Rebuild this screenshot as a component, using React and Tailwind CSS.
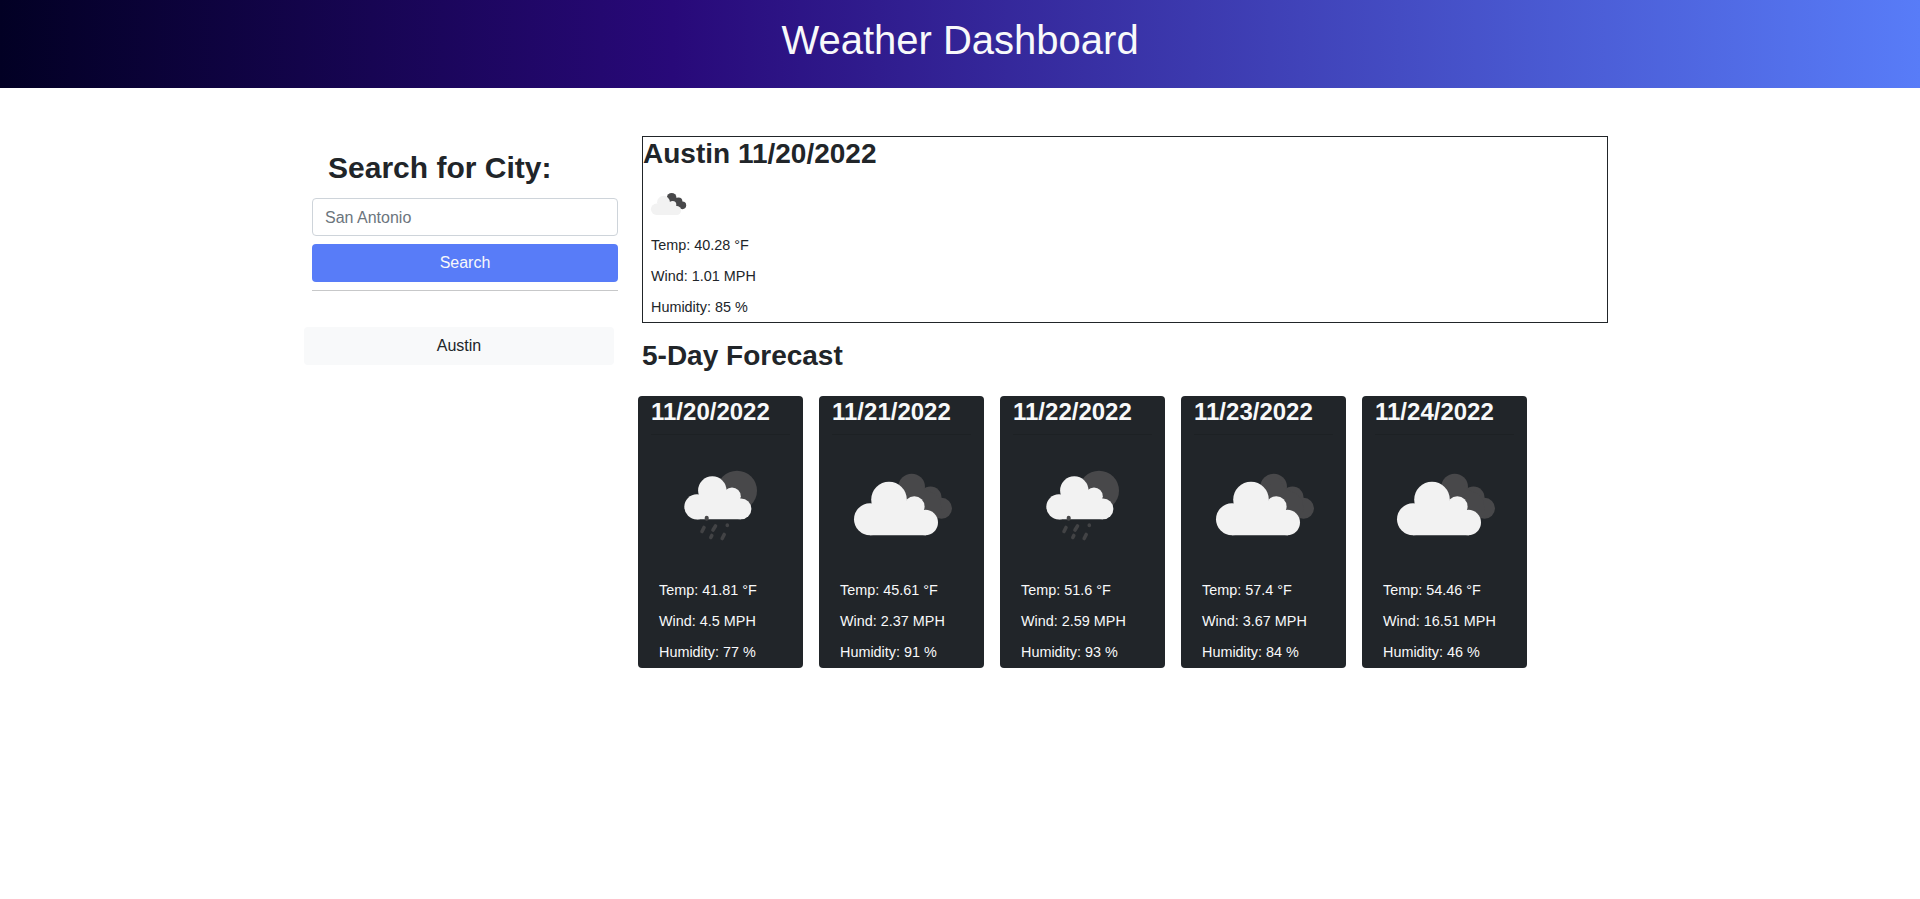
import React from "react";

const days = [
  { date: "11/20/2022", icon: "rain", temp: "41.81", wind: "4.5", humidity: "77" },
  { date: "11/21/2022", icon: "clouds", temp: "45.61", wind: "2.37", humidity: "91" },
  { date: "11/22/2022", icon: "rain", temp: "51.6", wind: "2.59", humidity: "93" },
  { date: "11/23/2022", icon: "clouds", temp: "57.4", wind: "3.67", humidity: "84" },
  { date: "11/24/2022", icon: "clouds", temp: "54.46", wind: "16.51", humidity: "46" },
];

// Broken clouds, drawn in card pixels (139 x 139)
function Clouds({ className }) {
  return (
    <svg viewBox="0 0 139 139" className={className}>
      <g fill="#48484a">
        <circle cx="79.7" cy="52" r="13.3" />
        <circle cx="98.5" cy="62.5" r="11" />
        <circle cx="109.5" cy="73.3" r="10.5" />
        <path d="M68 58L84 42L91 53L104 60L108 65L110 76L103 82Z" />
      </g>
      <g fill="#f2f2f2">
        <circle cx="38" cy="84.2" r="16" />
        <circle cx="57" cy="64.5" r="17.8" />
        <circle cx="82.3" cy="71.5" r="10.3" />
        <circle cx="93.3" cy="87.5" r="12.7" />
        <path d="M38 70L50 68L82 68L94 80V100.2H38Z" />
      </g>
    </svg>
  );
}

// Rain cloud in front of the moon
function Rain({ className }) {
  return (
    <svg viewBox="0 0 139 139" className={className}>
      <circle cx="86" cy="55.7" r="20" fill="#48484a" />
      <g fill="#f2f2f2">
        <circle cx="45.9" cy="71.8" r="12.6" />
        <circle cx="61.3" cy="55.5" r="14.2" />
        <circle cx="81" cy="61.3" r="8.8" />
        <circle cx="90" cy="73.9" r="10.4" />
        <path d="M46 62L58 56L82 60L90 68V84.3H46Z" />
      </g>
      <path d="M55.7 82.8v1" stroke="#48484a" strokeWidth="4" strokeLinecap="round" />
      <g stroke="#424345" strokeWidth="3.6" strokeLinecap="round">
        <path d="M53 92.500l-2 4M64.500 91l-2.500 4M76.300 90v.5M60.800 100.500l-1 2M73.200 99.500l-2 4" />
      </g>
    </svg>
  );
}

function Stats({ temp, wind, humidity, className }) {
  return (
    <div className={`flex flex-col gap-[10px] text-[14.4px] leading-[21px] ${className}`}>
      <p>Temp: {temp} °F</p>
      <p>Wind: {wind} MPH</p>
      <p>Humidity: {humidity} %</p>
    </div>
  );
}

function DayCard({ day }) {
  const Icon = day.icon === "rain" ? Rain : Clouds;
  return (
    <article className="flex h-[272px] w-[165px] flex-col rounded-[4px] bg-[#212529] text-[#f8f9fa]">
      <h3 className="ml-[13px] mt-[1px] text-[24px] font-bold leading-[29px]">{day.date}</h3>
      <hr className="mx-[13px] mt-[8px] border-0 border-t border-[#1d2124]" />
      <Icon className="mx-[13px] h-[139px] w-[139px]" />
      <Stats {...day} className="ml-[21px] mt-[6px]" />
    </article>
  );
}

export default function App() {
  return (
    <div className="min-h-[899px] bg-white font-['Liberation_Sans',Arial,sans-serif] text-[16px] text-[#212529]">
      <header className="flex h-[88px] justify-center bg-[linear-gradient(90deg,#020024_0%,#280979_35%,#587cf8_100%)] pt-[16px] text-[#f8f9fa]">
        <h1 className="text-[40px] leading-[48px]">Weather Dashboard</h1>
      </header>
      <main className="flex pl-[304px] pt-[48px]">
        <aside className="w-[334px] pt-[13px]">
          <h2 className="ml-[24px] text-[30px] font-bold leading-[38px]">Search for City:</h2>
          <div className="ml-[8px] mt-[11px] flex w-[306px] flex-col gap-[8px]">
            <input
              placeholder="San Antonio"
              className="h-[38px] rounded-[4px] border border-[#ced4da] px-[12px] pt-px placeholder:text-[#6c757d]"
            />
            <button className="h-[38px] rounded-[4px] bg-[#587cf8] text-[#f8f9fa]">Search</button>
            <hr className="border-0 border-t border-[#c7c8c9]" />
          </div>
          <button className="mt-[36px] h-[38px] w-[310px] rounded-[4px] bg-[#f8f9fa]">Austin</button>
        </aside>
        <div>
          <section className="ml-[4px] h-[187px] w-[966px] border border-[#212529]">
            <h2 className="text-[28px] font-bold leading-[33px]">Austin 11/20/2022</h2>
            <Clouds className="mt-[9px] h-[50px] w-[50px]" />
            <Stats temp="40.28" wind="1.01" humidity="85" className="ml-[8px] mt-[6px]" />
          </section>
          <h2 className="ml-[4px] mt-[16px] text-[28px] font-bold leading-[34px]">5-Day Forecast</h2>
          <div className="mt-[23px] flex gap-[16px]">
            {days.map((day) => (
              <DayCard key={day.date} day={day} />
            ))}
          </div>
        </div>
      </main>
    </div>
  );
}
